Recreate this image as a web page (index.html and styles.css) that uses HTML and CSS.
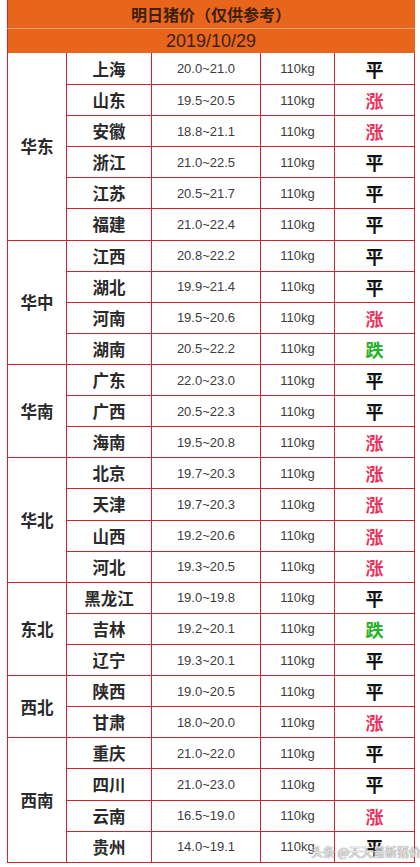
FILE: index.html
```html
<!DOCTYPE html>
<html lang="zh">
<head>
<meta charset="utf-8">
<link rel="stylesheet" href="styles.css">
</head>
<body>
<div class="page">
<table class="price">
  <colgroup>
    <col class="c-region"><col class="c-prov"><col class="c-price"><col class="c-weight"><col class="c-trend">
  </colgroup>
  <thead>
    <tr class="title"><th colspan="5">明日猪价（仅供参考）</th></tr>
    <tr class="date"><th colspan="5">2019/10/29</th></tr>
  </thead>
  <tbody>
    <tr><td class="region" rowspan="6">华东</td><td class="prov">上海</td><td class="num">20.0~21.0</td><td class="num">110kg</td><td class="flat">平</td></tr>
    <tr><td class="prov">山东</td><td class="num">19.5~20.5</td><td class="num">110kg</td><td class="up">涨</td></tr>
    <tr><td class="prov">安徽</td><td class="num">18.8~21.1</td><td class="num">110kg</td><td class="up">涨</td></tr>
    <tr><td class="prov">浙江</td><td class="num">21.0~22.5</td><td class="num">110kg</td><td class="flat">平</td></tr>
    <tr><td class="prov">江苏</td><td class="num">20.5~21.7</td><td class="num">110kg</td><td class="flat">平</td></tr>
    <tr><td class="prov">福建</td><td class="num">21.0~22.4</td><td class="num">110kg</td><td class="flat">平</td></tr>

    <tr><td class="region" rowspan="4">华中</td><td class="prov">江西</td><td class="num">20.8~22.2</td><td class="num">110kg</td><td class="flat">平</td></tr>
    <tr><td class="prov">湖北</td><td class="num">19.9~21.4</td><td class="num">110kg</td><td class="flat">平</td></tr>
    <tr><td class="prov">河南</td><td class="num">19.5~20.6</td><td class="num">110kg</td><td class="up">涨</td></tr>
    <tr><td class="prov">湖南</td><td class="num">20.5~22.2</td><td class="num">110kg</td><td class="down">跌</td></tr>

    <tr><td class="region" rowspan="3">华南</td><td class="prov">广东</td><td class="num">22.0~23.0</td><td class="num">110kg</td><td class="flat">平</td></tr>
    <tr><td class="prov">广西</td><td class="num">20.5~22.3</td><td class="num">110kg</td><td class="flat">平</td></tr>
    <tr><td class="prov">海南</td><td class="num">19.5~20.8</td><td class="num">110kg</td><td class="up">涨</td></tr>

    <tr><td class="region" rowspan="4">华北</td><td class="prov">北京</td><td class="num">19.7~20.3</td><td class="num">110kg</td><td class="up">涨</td></tr>
    <tr><td class="prov">天津</td><td class="num">19.7~20.3</td><td class="num">110kg</td><td class="up">涨</td></tr>
    <tr><td class="prov">山西</td><td class="num">19.2~20.6</td><td class="num">110kg</td><td class="up">涨</td></tr>
    <tr><td class="prov">河北</td><td class="num">19.3~20.5</td><td class="num">110kg</td><td class="up">涨</td></tr>

    <tr><td class="region" rowspan="3">东北</td><td class="prov">黑龙江</td><td class="num">19.0~19.8</td><td class="num">110kg</td><td class="flat">平</td></tr>
    <tr><td class="prov">吉林</td><td class="num">19.2~20.1</td><td class="num">110kg</td><td class="down">跌</td></tr>
    <tr><td class="prov">辽宁</td><td class="num">19.3~20.1</td><td class="num">110kg</td><td class="flat">平</td></tr>

    <tr><td class="region" rowspan="2">西北</td><td class="prov">陕西</td><td class="num">19.0~20.5</td><td class="num">110kg</td><td class="flat">平</td></tr>
    <tr><td class="prov">甘肃</td><td class="num">18.0~20.0</td><td class="num">110kg</td><td class="up">涨</td></tr>

    <tr><td class="region" rowspan="4">西南</td><td class="prov">重庆</td><td class="num">21.0~22.0</td><td class="num">110kg</td><td class="flat">平</td></tr>
    <tr><td class="prov">四川</td><td class="num">21.0~23.0</td><td class="num">110kg</td><td class="flat">平</td></tr>
    <tr><td class="prov">云南</td><td class="num">16.5~19.0</td><td class="num">110kg</td><td class="up">涨</td></tr>
    <tr><td class="prov">贵州</td><td class="num">14.0~19.1</td><td class="num">110kg</td><td class="flat">平</td></tr>
  </tbody>
</table>
<div class="watermark">头条 @天天最新猪价</div>
</div>
</body>
</html>
```

FILE: styles.css
```css
html, body {
  margin: 0;
  padding: 0;
  background: #ffffff;
}

.page {
  position: relative;
  width: 420px;
  height: 867px;
  overflow: hidden;
}

.price {
  margin-left: 7px;
  width: 407px;
  border-collapse: collapse;
  table-layout: fixed;
  font-family: "Noto Sans CJK SC", "Liberation Sans", sans-serif;
}

.c-region { width: 59px; }
.c-prov { width: 85px; }
.c-price { width: 109px; }
.c-weight { width: 74px; }
.c-trend { width: 80px; }

.title th,
.date th {
  background: #e8661c;
  color: #3e200f;
  padding: 0;
  text-align: center;
  border-left: 1px solid #d8202a;
  border-right: 1px solid #e8661c;
}

.title th {
  height: 28px;
  font-size: 16px;
  font-weight: 700;
  border-bottom: 1px solid #f2a06a;
  line-height: 28px;
}

.date th {
  height: 24px;
  font-family: "Liberation Sans", "Noto Sans CJK SC", sans-serif;
  font-size: 18px;
  font-weight: 400;
  line-height: 24px;
}

tbody td {
  border: 1px solid #d0222e;
  height: 30.12px;
  padding: 0;
  text-align: center;
  vertical-align: middle;
}

tbody tr:first-child td {
  border-top: none;
  height: 31px;
}

.region,
.prov {
  font-size: 16.5px;
  font-weight: 700;
  color: #2a2a2a;
}

.num {
  font-family: "Liberation Sans", "Noto Sans CJK SC", sans-serif;
  font-size: 13px;
  color: #3c3c3c;
}

.flat,
.up,
.down {
  font-size: 18px;
  font-weight: 700;
}

.flat { color: #111111; }
.up { color: #e8345c; }
.down { color: #22b422; }

.watermark {
  position: absolute;
  left: 311px;
  top: 843px;
  font-family: "Noto Sans CJK SC", sans-serif;
  font-size: 12px;
  color: rgba(255, 255, 255, 0.85);
  text-shadow: 0 0 1px #777, 0 0 1px #777;
  white-space: nowrap;
}
```
